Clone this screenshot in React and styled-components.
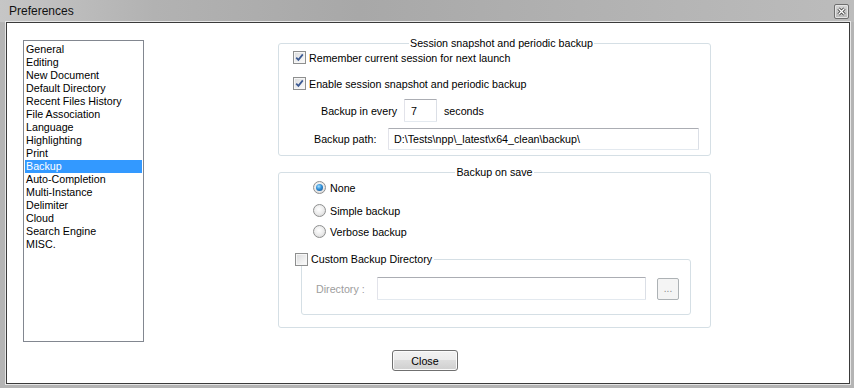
import styled, { createGlobalStyle } from "styled-components";

const GlobalStyle = createGlobalStyle`
  html, body {
    margin: 0;
    padding: 0;
    background: #b4b4b4;
  }
  body {
    font-family: "Liberation Sans", Arial, sans-serif;
    font-size: 10.7px;
    color: #000;
  }
  #root {
    width: 854px;
    height: 388px;
  }
`;

const Window = styled.div`
  width: 854px;
  height: 388px;
  display: flex;
  flex-direction: column;
  background: #b4b4b4;
`;

const TitleBar = styled.div`
  height: 22px;
  flex-shrink: 0;
  box-sizing: border-box;
  display: flex;
  align-items: center;
  justify-content: space-between;
  padding: 0 5px 0 9px;
  background: linear-gradient(
    to right,
    #c6c6c6 0%,
    #b2b2b2 18%,
    #a8a8a8 42%,
    #b0b0b0 65%,
    #bcbcbc 100%
  );
`;

const TitleText = styled.span`
  font-size: 12px;
  color: #111;
`;

const CloseX = styled.span`
  width: 15px;
  height: 15px;
  box-sizing: border-box;
  border: 1px solid #6e6e6e;
  border-radius: 2px;
  background: linear-gradient(#d6d6d6, #b9b9b9);
  box-shadow: inset 0 0 0 1px #e4e4e4;
  display: flex;
  align-items: center;
  justify-content: center;
`;

const Frame = styled.div`
  flex: 1;
  display: flex;
  padding: 0 4px 4px 6px;
`;

const Client = styled.div`
  flex: 1;
  display: flex;
  flex-direction: column;
  background: #fff;
  border: 1px solid #3a3a3a;
  box-shadow: 0 0 0 1px #e6e6e6;
`;

const Main = styled.div`
  display: flex;
  align-items: flex-start;
`;

const List = styled.ul`
  list-style: none;
  margin: 17px 0 0 16px;
  padding: 2px 1px 1px;
  width: 121px;
  height: 302px;
  box-sizing: border-box;
  border: 1px solid #828790;
`;

const Item = styled.li`
  height: 13px;
  line-height: 13px;
  padding: 0 1px;
  white-space: nowrap;
  background: ${(p) => (p.$selected ? "#3399ff" : "transparent")};
  color: ${(p) => (p.$selected ? "#fff" : "#000")};
`;

const RightCol = styled.div`
  margin: 14px 0 0 134px;
  width: 433px;
  display: flex;
  flex-direction: column;
  gap: 10px;
`;

const Group = styled.fieldset`
  margin: ${(p) => p.$margin || "0"};
  padding: ${(p) => p.$pad};
  border: 1px solid #d5dfe5;
  border-radius: 3px;
  min-width: 0;
  display: flex;
  flex-direction: column;
`;

const Legend = styled.legend`
  margin: 0 auto;
  padding: 0 1px;
  height: 13px;
  line-height: 13px;
`;

const CheckLegend = styled.legend`
  margin: 0 0 0 -21px;
  padding: 0 2px 0 0;
  height: 13px;
  line-height: 13px;
  display: flex;
  align-items: center;
  gap: 3px;
`;

const Row = styled.div`
  display: flex;
  align-items: center;
  height: ${(p) => p.$h || 13}px;
  margin-top: ${(p) => p.$top || 0}px;
  padding-left: ${(p) => p.$indent || 0}px;
  gap: ${(p) => p.$gap || 0}px;
  white-space: nowrap;
`;

const Label = styled.span`
  width: ${(p) => p.$w}px;
  flex-shrink: 0;
  color: ${(p) => (p.$disabled ? "#9d9d9d" : "#000")};
`;

const Field = styled.div`
  width: ${(p) => p.$w}px;
  height: ${(p) => p.$h}px;
  box-sizing: border-box;
  border: 1px solid;
  border-color: #abadb3 #dbdfe6 #e3e9ef #e2e3ea;
  border-radius: 1px;
  padding-left: ${(p) => p.$padLeft || 5}px;
  display: flex;
  align-items: center;
  background: #fff;
`;

const Suffix = styled.span`
  margin-left: 7px;
`;

const CheckBox = styled.span`
  width: 13px;
  height: 13px;
  flex-shrink: 0;
  box-sizing: border-box;
  border: 1px solid #8e8f8f;
  background: linear-gradient(135deg, #d9dadb 0%, #f3f3f3 70%, #fbfbfb 100%);
  box-shadow: inset 0 0 0 1px #f6f6f6;
  display: flex;
  align-items: center;
  justify-content: center;
`;

const RadioBox = styled.span`
  width: 13px;
  height: 13px;
  flex-shrink: 0;
  box-sizing: border-box;
  border-radius: 50%;
  border: 1px solid #8e8f8f;
  background: radial-gradient(circle at 45% 40%, #ffffff 0%, #ececec 50%, #cfcfcf 100%);
  display: flex;
  align-items: center;
  justify-content: center;
`;

const RadioDot = styled.span`
  width: 7px;
  height: 7px;
  border-radius: 50%;
  background: radial-gradient(circle at 40% 35%, #a6e0ff 0%, #2f8fd8 45%, #16457d 100%);
`;

const Dots = styled.span`
  width: 22px;
  height: 22px;
  margin-left: 11px;
  box-sizing: border-box;
  border: 1px solid #adb2b5;
  border-radius: 2px;
  background: #f4f4f4;
  color: #8c8c8c;
  display: flex;
  align-items: center;
  justify-content: center;
  font-size: 10px;
`;

const Footer = styled.div`
  display: flex;
  margin: 8px 0 0 385px;
`;

const Button = styled.button`
  width: 66px;
  height: 21px;
  padding: 0;
  border: 1px solid #707070;
  border-radius: 3px;
  font-family: inherit;
  font-size: 10.7px;
  color: #000;
  background: linear-gradient(#f2f2f2 0%, #ebebeb 49%, #dddddd 50%, #cfcfcf 100%);
  box-shadow: inset 0 0 0 1px #fbfbfb;
`;

const pages = [
  "General",
  "Editing",
  "New Document",
  "Default Directory",
  "Recent Files History",
  "File Association",
  "Language",
  "Highlighting",
  "Print",
  "Backup",
  "Auto-Completion",
  "Multi-Instance",
  "Delimiter",
  "Cloud",
  "Search Engine",
  "MISC.",
];

function Check({ checked }) {
  return (
    <CheckBox>
      {checked && (
        <svg width="9" height="9" viewBox="0 0 9 9">
          <path
            d="M1.2 4.6 L3.4 6.9 L7.8 1.4"
            fill="none"
            stroke="#3c5a93"
            strokeWidth="1.7"
          />
        </svg>
      )}
    </CheckBox>
  );
}

function Radio({ checked }) {
  return <RadioBox>{checked && <RadioDot />}</RadioBox>;
}

export default function App() {
  return (
    <>
      <GlobalStyle />
      <Window>
        <TitleBar>
          <TitleText>Preferences</TitleText>
          <CloseX>
            <svg width="9" height="9" viewBox="0 0 9 9">
              <path d="M1.5 1.5 L7.5 7.5 M7.5 1.5 L1.5 7.5" stroke="#3a3a3a" strokeWidth="3" />
              <path d="M1.5 1.5 L7.5 7.5 M7.5 1.5 L1.5 7.5" stroke="#fff" strokeWidth="1.4" />
            </svg>
          </CloseX>
        </TitleBar>
        <Frame>
          <Client>
            <Main>
              <List>
                {pages.map((p) => (
                  <Item key={p} $selected={p === "Backup"}>
                    {p}
                  </Item>
                ))}
              </List>
              <RightCol>
                <Group $pad="1px 0 5px 14px">
                  <Legend>Session snapshot and periodic backup</Legend>
                  <Row $gap={3}>
                    <Check checked />
                    <span>Remember current session for next launch</span>
                  </Row>
                  <Row $gap={3} $top={13}>
                    <Check checked />
                    <span>Enable session snapshot and periodic backup</span>
                  </Row>
                  <Row $h={23} $top={9} $indent={28}>
                    <Label $w={83}>Backup in every</Label>
                    <Field $w={33} $h={23} $padLeft={6}>
                      7
                    </Field>
                    <Suffix>seconds</Suffix>
                  </Row>
                  <Row $h={22} $top={6} $indent={21}>
                    <Label $w={74}>Backup path:</Label>
                    <Field $w={311} $h={22}>
                      D:\Tests\npp\_latest\x64_clean\backup\
                    </Field>
                  </Row>
                </Group>
                <Group $pad="2px 0 12px 0">
                  <Legend>Backup on save</Legend>
                  <Row $gap={4} $indent={34}>
                    <Radio checked />
                    <span>None</span>
                  </Row>
                  <Row $gap={4} $indent={34} $top={10}>
                    <Radio />
                    <span>Simple backup</span>
                  </Row>
                  <Row $gap={4} $indent={34} $top={8}>
                    <Radio />
                    <span>Verbose backup</span>
                  </Row>
                  <Group $margin="15px 19px 0 22px" $pad="11px 0 14px 14px">
                    <CheckLegend>
                      <Check />
                      <span>Custom Backup Directory</span>
                    </CheckLegend>
                    <Row $h={23}>
                      <Label $w={61} $disabled>
                        Directory :
                      </Label>
                      <Field $w={269} $h={23} />
                      <Dots>...</Dots>
                    </Row>
                  </Group>
                </Group>
              </RightCol>
            </Main>
            <Footer>
              <Button>Close</Button>
            </Footer>
          </Client>
        </Frame>
      </Window>
    </>
  );
}
